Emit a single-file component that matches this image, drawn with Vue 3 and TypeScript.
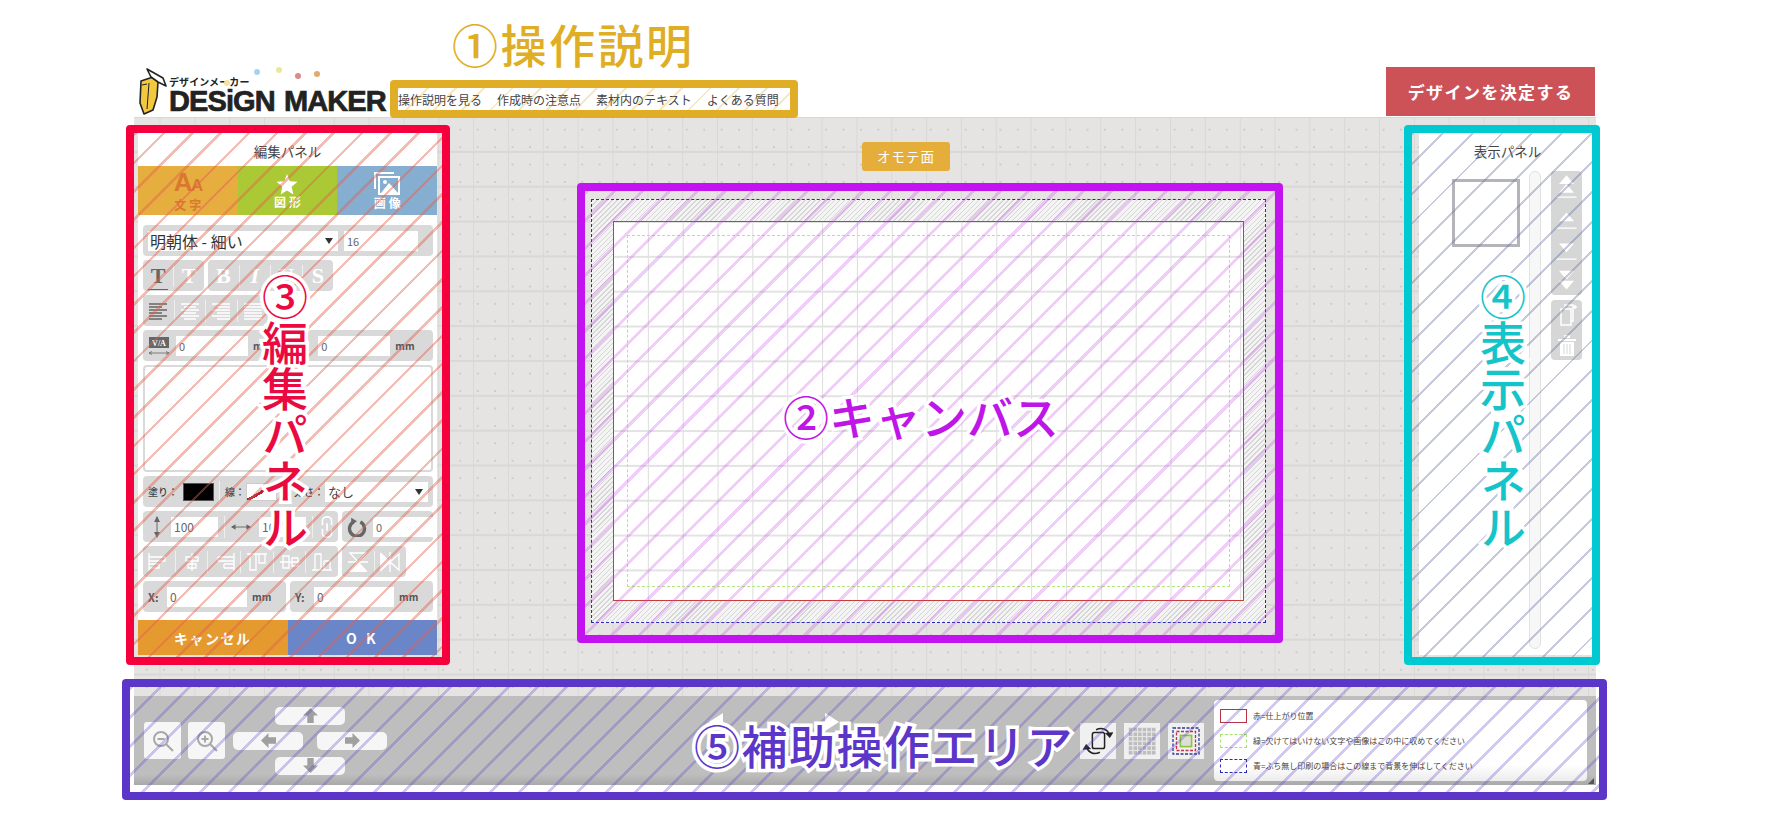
<template>
  <div class="page">
    <header class="top">
      <div class="logo">
        <svg class="logo__pencil" viewBox="0 0 30 48" width="30" height="48">
          <path d="M3 14 L15 10 L20 15 L19 30 L15 43 L6 47 L2 36 Z" fill="#f2c83e" stroke="#222" stroke-width="1.600" stroke-linejoin="round" />
          <path d="M9 2 L25 11 L28 19 L20 15 L13 10 Z" fill="#fff" stroke="#222" stroke-width="1.600" stroke-linejoin="round" />
          <path d="M11 16 L9 42 M4 18 L9 17" fill="none" stroke="#222" stroke-width="1" />
        </svg>
        <div class="logo__text">
          <span class="logo__kana">デザインメーカー</span>
          <span class="logo__name">DESiGN MAKER</span>
        </div>
        <i class="dot dot--blue" /><i class="dot dot--lime" /><i class="dot dot--red" /><i class="dot dot--orange" /><i class="dot dot--yellow" />
      </div>
      <nav class="guide-nav">
        <a v-for="item in navItems" :key="item">{{ item }}</a>
      </nav>
      <button type="button" class="decide">デザインを決定する</button>
    </header>

    <main class="workspace">
      <section class="edit-panel">
        <h2 class="panel-title">編集パネル</h2>
        <div class="tabs">
          <div class="tab tab--text">
            <span class="tab__aa">A<small>A</small></span>
            <span class="tab__label tab__label--dark">文字</span>
          </div>
          <div class="tab tab--shape">
            <svg viewBox="0 0 24 24" width="22" height="22"><path d="M12 1 L15 9 L23.500 9.500 L17 15 L19 23.500 L12 19 L5 23.500 L7 15 L0.500 9.500 L9 9 Z" fill="#fff" /></svg>
            <span class="tab__label">図形</span>
          </div>
          <div class="tab tab--image">
            <svg viewBox="0 0 26 24" width="26" height="24" fill="none" stroke="#fff" stroke-width="2">
              <path d="M1 17 V1 H20" />
              <path d="M5 5 H25 V22 H5 Z" />
              <path d="M7 21 L15 11 L24 21 Z" fill="#fff" stroke="none" />
              <circle cx="11" cy="10" r="2" fill="#fff" stroke="none" />
            </svg>
            <span class="tab__label">画像</span>
          </div>
        </div>

        <div class="edit-body">
          <div class="band band--font">
            <div class="select select--font">明朝体 - 細い<i class="caret" /></div>
            <div class="field field--size">16</div>
          </div>

          <div class="row-groups">
            <div class="band band--style-a">
              <span class="letter letter--on">T<i class="letter__arrow" /></span>
              <span class="letter">T</span>
            </div>
            <div class="band band--style-b">
              <span v-for="(l, i) in styleLetters" :key="i" class="letter" :class="{ 'letter--italic': l === 'I' }">{{ l }}</span>
            </div>
          </div>

          <div class="row-groups">
            <div class="band band--align">
              <span v-for="(a, i) in alignPaths" :key="i" class="cell">
                <svg viewBox="0 0 20 18" width="20" height="18" fill="none" :stroke="i === 0 ? '#666' : '#fff'" stroke-width="1.600"><path :d="a" /></svg>
              </span>
            </div>
          </div>

          <div class="band band--spacing">
            <svg class="spacing-icon" viewBox="0 0 22 20" width="22" height="20">
              <rect x="1" y="1" width="20" height="11" fill="#666" />
              <text x="11" y="10" font-size="8" font-weight="700" fill="#fff" text-anchor="middle" font-family="Liberation Serif, serif">V/A</text>
              <path d="M1 17 H21 M1 17 L4 15.500 M1 17 L4 18.500 M21 17 L18 15.500 M21 17 L18 18.500" stroke="#666" fill="none" stroke-width="0.800" />
            </svg>
            <div class="field field--spacing">0</div>
            <span class="unit">mm</span>
            <div class="field field--spacing field--push">0</div>
            <span class="unit">mm</span>
          </div>

          <div class="textbox" />

          <div class="band band--colors">
            <span class="small-label">塗り：</span>
            <i class="swatch swatch--fill" />
            <i class="divider" />
            <span class="small-label">線：</span>
            <i class="swatch swatch--stroke" />
            <span class="small-label small-label--weight">太さ：</span>
            <div class="select select--weight">なし<i class="caret" /></div>
          </div>

          <div class="row-groups">
            <div class="band band--size">
              <svg viewBox="0 0 12 24" width="12" height="24" stroke="#666" fill="#666"><path d="M6 2 V22" stroke-width="1" /><path d="M6 1 L3 7 H9 Z M6 23 L3 17 H9 Z" stroke="none" /></svg>
              <div class="field field--dim">100</div>
              <i class="divider" />
              <svg viewBox="0 0 22 10" width="20" height="10" stroke="#666" fill="#666"><path d="M1 5 H21" stroke-width="1" /><path d="M0 5 L5 2 V8 Z M22 5 L17 2 V8 Z" stroke="none" /></svg>
              <div class="field field--dim">100</div>
              <i class="divider" />
              <svg viewBox="0 0 16 24" width="16" height="22" fill="none" stroke="#fff" stroke-width="1.800"><path d="M3 10 V5 A5 4 0 0 1 13 5 V10 M3 14 V19 A5 4 0 0 0 13 19 V14 M8 8 V16" /></svg>
            </div>
            <div class="band band--rotate">
              <svg viewBox="0 0 24 24" width="20" height="20" fill="none" stroke="#666" stroke-width="4"><path d="M8 6 A9 9 0 1 0 16 6" /><path d="M5 1 L12 5 L5 10 Z" fill="#666" stroke="none" /></svg>
              <div class="field field--rot">0</div>
            </div>
          </div>

          <div class="row-groups">
            <div class="band band--objects">
              <span v-for="(o, i) in objectPaths" :key="i" class="cell">
                <svg viewBox="0 0 24 20" width="24" height="20" fill="none" stroke="#fff" stroke-width="1.300"><path :d="o" /></svg>
              </span>
            </div>
            <div class="band band--flip">
              <span class="cell"><svg viewBox="0 0 22 22" width="22" height="22" fill="none" stroke="#fff" stroke-width="1.300"><path d="M3 2 H19 L3 20 H19 Z M1 11 H21" /><path d="M3 20 H19 L11 11 Z" fill="#fff" /></svg></span>
              <span class="cell"><svg viewBox="0 0 22 22" width="22" height="22" fill="none" stroke="#fff" stroke-width="1.300"><path d="M2 3 V19 L20 3 V19 Z M11 1 V21" /><path d="M2 3 V19 L11 11 Z" fill="#fff" /></svg></span>
            </div>
          </div>

          <div class="row-groups">
            <div class="band band--pos">
              <b>X:</b><div class="field field--pos">0</div><span class="unit">mm</span>
            </div>
            <div class="band band--pos">
              <b>Y:</b><div class="field field--pos">0</div><span class="unit">mm</span>
            </div>
          </div>
        </div>

        <div class="actions">
          <button type="button" class="action action--cancel">キャンセル</button>
          <button type="button" class="action action--ok">O K</button>
        </div>
      </section>

      <section class="stage">
        <div class="side-badge">オモテ面</div>
        <div class="bleed">
          <div class="trim">
            <div class="safe" />
          </div>
        </div>
      </section>

      <aside class="view-panel">
        <h2 class="panel-title panel-title--view">表示パネル</h2>
        <div class="view-body">
          <div class="thumb" />
          <div class="scroll" />
          <div class="layer-tools">
            <div class="layer-group">
              <span v-for="(p, i) in layerPaths" :key="i" class="layer-btn">
                <svg viewBox="0 0 20 20" width="25" height="25" fill="#fff"><path :d="p" /></svg>
              </span>
            </div>
            <div class="layer-group">
              <span class="layer-btn layer-btn--tall">
                <svg viewBox="0 0 22 24" width="22" height="24" fill="none" stroke="#fff" stroke-width="1.500"><path d="M5 6 H15 V22 H5 Z M9 6 V2 H17 V18 H15 M19 2 V6 M17 4 H21" /></svg>
              </span>
              <span class="layer-btn layer-btn--tall">
                <svg viewBox="0 0 20 24" width="20" height="24" fill="#fff"><path d="M1 6 H19 V8 H1 Z M7 2 H13 V5 H7 Z M3 9 H17 V23 H3 Z" /><path d="M7 11 V21 M10 11 V21 M13 11 V21" stroke="#d6d6d6" stroke-width="1" /></svg>
              </span>
            </div>
          </div>
        </div>
      </aside>
    </main>

    <footer class="assist">
      <button type="button" class="zoom-btn">
        <svg viewBox="0 0 24 24" width="24" height="24" fill="none" stroke="#a8a8a8" stroke-width="2"><circle cx="10" cy="10" r="7" /><path d="M6.500 10 H13.500 M15 15 L22 22" /></svg>
      </button>
      <button type="button" class="zoom-btn">
        <svg viewBox="0 0 24 24" width="24" height="24" fill="none" stroke="#a8a8a8" stroke-width="2"><circle cx="10" cy="10" r="7" /><path d="M6.500 10 H13.500 M10 6.500 V13.500 M15 15 L22 22" /></svg>
      </button>
      <div class="arrows">
        <button type="button" class="arrow arrow--up"><svg viewBox="0 0 14 14" width="15" height="15"><path d="M7 0 L14 7 H10 V14 H4 V7 H0 Z" fill="#a0a0a0" /></svg></button>
        <button type="button" class="arrow"><svg viewBox="0 0 14 14" width="15" height="15"><path d="M0 7 L7 0 V4 H14 V10 H7 V14 Z" fill="#a0a0a0" /></svg></button>
        <button type="button" class="arrow arrow--right"><svg viewBox="0 0 14 14" width="15" height="15"><path d="M14 7 L7 0 V4 H0 V10 H7 V14 Z" fill="#a0a0a0" /></svg></button>
        <button type="button" class="arrow arrow--down"><svg viewBox="0 0 14 14" width="15" height="15"><path d="M7 14 L14 7 H10 V0 H4 V7 H0 Z" fill="#a0a0a0" /></svg></button>
      </div>
      <div class="page-flip">
        <svg viewBox="0 0 20 20" width="20" height="20"><path d="M0 10 L14 1 V19 Z" fill="#fff" /></svg>
        <svg viewBox="0 0 20 20" width="20" height="20"><path d="M20 10 L6 1 V19 Z" fill="#fff" /></svg>
      </div>

      <div class="tools">
        <button type="button" class="tool">
          <svg viewBox="0 0 32 32" width="30" height="30" fill="none" stroke="#222" stroke-width="1.600">
            <rect x="10" y="7" width="13" height="17" rx="2" />
            <path d="M14 4 C20 1 26 3 28 9" /><path d="M25 8 L28.500 11.500 L31 7.500 Z" fill="#222" />
            <path d="M18 28 C12 31 6 29 4 23" /><path d="M7 24 L3.500 20.500 L1 24.500 Z" fill="#222" />
          </svg>
        </button>
        <button type="button" class="tool">
          <svg viewBox="0 0 28 28" width="28" height="28" fill="#bdbdbd" stroke="#e8e8e8" stroke-width="0.800">
            <template v-for="y in 6" :key="y"><rect v-for="x in 6" :key="x" :x="(x - 1) * 4.600 + 0.500" :y="(y - 1) * 4.600 + 0.500" width="4.400" height="4.400" /></template>
          </svg>
        </button>
        <button type="button" class="tool">
          <svg viewBox="0 0 28 28" width="28" height="28" fill="none" stroke-width="1.300">
            <rect x="1" y="1" width="26" height="26" stroke="#2c3a90" stroke-dasharray="3 1.500" />
            <rect x="4.500" y="4.500" width="19" height="19" stroke="#c0334a" stroke-dasharray="3 1.500" />
            <rect x="8.500" y="8.500" width="11" height="11" stroke="#8cc63f" stroke-width="1.800" />
            <rect x="10" y="10" width="8" height="8" fill="#ddd" stroke="none" />
          </svg>
        </button>
      </div>

      <div class="legend">
        <div v-for="item in legendItems" :key="item.text" class="legend__row">
          <i class="legend__swatch" :class="`legend__swatch--${item.kind}`" />
          <span>{{ item.text }}</span>
        </div>
        <i class="legend__corner" />
      </div>
    </footer>

    <!-- 説明用の枠 -->
    <div class="mark mark--guide" />
    <div class="mark mark--canvas" />
    <div class="mark mark--edit" />
    <div class="mark mark--view" />
    <div class="mark mark--assist" />

    <div class="caption caption--guide">①操作説明</div>
    <div class="caption caption--canvas">②キャンバス</div>
    <div class="caption caption--edit caption--v">③編集パネル</div>
    <div class="caption caption--view caption--v">④表示パネル</div>
    <div class="caption caption--assist">⑤補助操作エリア</div>
  </div>
</template>

<script setup lang="ts">
const navItems = ['操作説明を見る', '作成時の注意点', '素材内のテキスト', 'よくある質問']
const styleLetters = ['B', 'I', 'U', 'S']

const alignPaths = [
  'M1 2 H19 M1 5 H14 M1 8 H19 M1 11 H14 M1 14 H19 M1 17 H14',
  'M1 2 H19 M4 5 H16 M1 8 H19 M4 11 H16 M1 14 H19 M4 17 H16',
  'M1 2 H19 M6 5 H19 M1 8 H19 M6 11 H19 M1 14 H19 M6 17 H19',
  'M1 2 H19 M1 5 H19 M1 8 H19 M1 11 H19 M1 14 H19 M1 17 H19'
]

const objectPaths = [
  'M2 1 V19 M2 5 H18 V9 H2 M2 12 H12 V16 H2',
  'M12 1 V19 M6 5 H18 V9 H6 Z M8 12 H16 V16 H8 Z',
  'M22 1 V19 M6 5 H22 M6 9 H22 M6 5 V9 M12 12 H22 M12 16 H22 M12 12 V16',
  'M2 2 H22 M5 2 V18 H11 V2 M14 2 V11 H20 V2',
  'M2 10 H22 M5 4 H11 V16 H5 Z M14 6 H20 V14 H14 Z',
  'M2 18 H22 M5 2 H11 V18 M5 2 V18 M14 9 H20 V18 M14 9 V18'
]

const layerPaths = [
  'M10 1 L16 8 H4 Z M10 8 L16 15 H4 Z M2 18 H18 V19 H2 Z',
  'M10 6 L16 13 H4 Z M2 18 H18 V19 H2 Z',
  'M4 6 H16 L10 13 Z M2 18 H18 V19 H2 Z',
  'M4 3 H16 L10 10 Z M4 11 H16 L10 18 Z'
]

const legendItems = [
  { kind: 'red', text: '赤=仕上がり位置' },
  { kind: 'green', text: '緑=欠けてはいけない文字や画像はこの中に収めてください' },
  { kind: 'blue', text: '青=ふち無し印刷の場合はこの線まで背景を伸ばしてください' }
]
</script>

<style>
body {
  background: #fff;
}
</style>

<style scoped>
.page {
  position: relative;
  box-sizing: border-box;
  width: 1771px;
  height: 834px;
  padding-left: 134px;
  overflow: hidden;
  background: #fff;
  font-family: "Noto Sans CJK JP", "Noto Sans", sans-serif;
  color: #444;
}

.top {
  display: flex;
  align-items: flex-end;
  width: 1462px;
  height: 117px;
  padding-left: 4px;
  box-sizing: border-box;
}

.logo {
  position: relative;
  display: flex;
  align-items: flex-end;
  width: 248px;
  margin-bottom: 2px;
}

.logo__pencil {
  flex: none;
  margin-right: 1px;
}

.logo__text {
  display: flex;
  flex-direction: column;
}

.logo__kana {
  font-size: 10px;
  line-height: 12px;
  font-weight: 700;
  color: #222;
  letter-spacing: 0.1px;
}

.logo__name {
  font-family: "Liberation Sans", sans-serif;
  font-size: 29px;
  line-height: 27px;
  font-weight: 700;
  color: #222;
  letter-spacing: -0.9px;
  word-spacing: 2px;
  white-space: nowrap;
  -webkit-text-stroke: 0.7px #222;
}

.dot {
  position: absolute;
  width: 6px;
  height: 6px;
  border-radius: 50%;
}

.dot--blue { left: 116px; top: 2px; background: #a6d3ec; }
.dot--lime { left: 138px; top: 0; background: #e8e89a; }
.dot--red { left: 157px; top: 6px; background: #dd8a8e; }
.dot--orange { left: 176px; top: 4px; background: #e2aa6c; }
.dot--yellow { left: 86px; top: 13px; background: #f3e3a0; }

.guide-nav {
  display: flex;
  gap: 15px;
  margin: 0 0 8px 10px;
  padding: 0 19px 0 2px;
  height: 20px;
  align-items: center;
  font-size: 12px;
  color: #444;
  white-space: nowrap;
}

.decide {
  width: 209px;
  height: 49px;
  margin: 0 1px 1px auto;
  border: 0;
  background: #cd5257;
  color: #fff;
  font-family: inherit;
  font-size: 17px;
  font-weight: 700;
  letter-spacing: 1.400px;
}

.workspace {
  display: flex;
  align-items: flex-start;
  box-sizing: border-box;
  width: 1462px;
  height: 579px;
  padding: 13px 0 0 4px;
  background-color: #e5e4e2;
  background-image:
    linear-gradient(#d8d8d6 1.500px, transparent 1.500px),
    linear-gradient(90deg, #d8d8d6 1px, transparent 1px),
    radial-gradient(circle, #c6c6c6 0.6px, transparent 1px);
  background-size: 34.85px 34.85px, 34.85px 34.85px, 17.425px 17.425px;
  background-position: 25.500px 33.900px, 25.500px 33.900px, 4px 4px;
}

.edit-panel {
  flex: none;
  width: 299px;
  height: 525px;
  background: #fff;
  display: flex;
  flex-direction: column;
}

.panel-title {
  height: 36px;
  margin: 0;
  font-size: 13.500px;
  font-weight: 400;
  line-height: 42px;
  text-align: center;
  color: #444;
}

.tabs {
  display: grid;
  grid-template-columns: repeat(3, 1fr);
  height: 49px;
}

.tab {
  display: flex;
  flex-direction: column;
  align-items: center;
  justify-content: center;
  gap: 0;
}

.tab--text { background: #e6ae3f; }
.tab--shape { background: #abc835; }
.tab--image { background: #86aed0; }

.tab__aa {
  font-family: "Liberation Sans", sans-serif;
  font-size: 26px;
  line-height: 25px;
  font-weight: 700;
  letter-spacing: -1.500px;
  color: #d9782f;
}

.tab__aa small {
  font-size: 17px;
}

.tab__label {
  font-size: 12px;
  line-height: 14px;
  font-weight: 700;
  letter-spacing: 3px;
  margin-right: -3px;
  color: #fff;
}

.tab__label--dark {
  color: #d9782f;
}

.edit-body {
  display: flex;
  flex-direction: column;
  gap: 4px;
  padding: 10px 4px 0 5px;
}

.band {
  display: flex;
  align-items: center;
  height: 31px;
  box-sizing: border-box;
  background: #d9d9d9;
  border-radius: 4px;
}

.row-groups {
  display: flex;
  gap: 4px;
}

.band--font {
  padding: 0 5px;
  gap: 6px;
}

.select {
  position: relative;
  background: #fff;
  height: 20px;
  line-height: 20px;
  box-sizing: border-box;
}

.select--font {
  width: 190px;
  padding-left: 2px;
  font-size: 16px;
  color: #333;
}

.select--weight {
  flex: 1;
  padding-left: 3px;
  font-size: 13px;
  margin-left: 1px;
}

.caret {
  position: absolute;
  right: 5px;
  top: 7px;
  width: 0;
  height: 0;
  border-left: 4px solid transparent;
  border-right: 4px solid transparent;
  border-top: 6px solid #333;
}

.field {
  background: #fff;
  height: 20px;
  line-height: 20px;
  padding-left: 3px;
  box-sizing: border-box;
  font-size: 11px;
  color: #666;
}

.field--size { width: 74px; }
.field--spacing { width: 72px; margin-left: 6px; }
.field--push { margin-left: 46px; }
.field--dim { width: 47px; margin-left: 8px; font-size: 12px; }
.field--rot { flex: 1; margin-left: 6px; }
.field--pos { width: 80px; margin-left: 7px; font-size: 12px; }

.unit {
  margin-left: 5px;
  font-size: 10px;
  font-weight: 700;
  color: #555;
}

.band--style-a { width: 61px; }
.band--style-b { width: 125px; }

.letter {
  position: relative;
  flex: 1;
  height: 22px;
  text-align: center;
  font-family: "Liberation Serif", serif;
  font-size: 22px;
  line-height: 22px;
  font-weight: 700;
  color: #fff;
}

.letter + .letter {
  border-left: 1px solid #efefef;
}

.letter--on {
  color: #666;
}

.letter--italic {
  font-style: italic;
}

.letter__arrow {
  position: absolute;
  left: 5px;
  right: 5px;
  bottom: -3px;
  height: 1px;
  background: #666;
}

.band--align {
  width: 125px;
}

.band--objects {
  width: 195px;
}

.band--flip {
  width: 64px;
}

.cell {
  flex: 1;
  display: flex;
  align-items: center;
  justify-content: center;
  height: 22px;
}

.cell + .cell {
  border-left: 1px solid #efefef;
}

.band--spacing {
  padding-left: 5px;
}

.spacing-icon {
  flex: none;
}

.textbox {
  height: 107px;
  box-sizing: border-box;
  border: 2px solid #d9d9d9;
  border-radius: 4px;
  background: #fff;
}

.band--colors {
  padding: 0 5px;
}

.small-label {
  font-size: 10px;
  font-weight: 500;
  color: #444;
  white-space: nowrap;
}

.small-label--weight {
  margin-left: 17px;
}

.swatch {
  flex: none;
  width: 31px;
  height: 18px;
  box-sizing: border-box;
}

.swatch--fill {
  margin-left: 5px;
  background: #000;
  border: 1px solid #555;
}

.swatch--stroke {
  margin-left: 1px;
  background: linear-gradient(150deg, #fff 45%, #b81f30 45%, #b81f30 55%, #fff 55%);
  border: 1px solid #ccc;
}

.divider {
  flex: none;
  width: 1px;
  height: 22px;
  margin: 0 5px;
  background: #efefef;
}

.band--size {
  width: 195px;
  padding-left: 8px;
}

.band--size .divider {
  margin: 0 6px;
}

.band--rotate {
  flex: 1;
  padding-left: 5px;
}

.band--pos {
  flex: 1;
  padding-left: 5px;
  font-size: 11px;
  color: #555;
}

.band--pos b {
  width: 12px;
  font-weight: 700;
}

.actions {
  display: grid;
  grid-template-columns: 1fr 1fr;
  height: 35px;
  margin-top: auto;
}

.action {
  border: 0;
  color: #fff;
  font-family: inherit;
  font-size: 14px;
  font-weight: 700;
  letter-spacing: 1.500px;
}

.action--cancel { background: #e59a30; }
.action--ok { background: #6a86c8; letter-spacing: 3px; }

.stage {
  flex: 1;
  display: flex;
  flex-direction: column;
  align-items: center;
}

.side-badge {
  width: 88px;
  height: 29px;
  margin: 12px 44px 28px 0;
  line-height: 29px;
  text-align: center;
  border-radius: 3px;
  background: #e5ae3a;
  color: #fff;
  font-size: 13.500px;
  font-weight: 400;
  letter-spacing: 1px;
}

.bleed {
  box-sizing: border-box;
  width: 675px;
  height: 424px;
  padding: 21px;
  border: 1px dashed #2a2ab8;
  background: repeating-linear-gradient(135deg, #d6d6d6 0 1px, #f4f4f4 1px 3.500px);
}

.trim {
  box-sizing: border-box;
  height: 100%;
  padding: 13px;
  border: 1px solid #c83c3c;
  background-color: #fff;
  background-image:
    linear-gradient(#e3e3e3 1.500px, transparent 1.500px),
    linear-gradient(90deg, #dcdcdc 1px, transparent 1px);
  background-size: 34.85px 34.85px;
  background-position: -1px -1px;
}

.safe {
  box-sizing: border-box;
  height: 100%;
  border: 1px dashed #b4e87e;
}

.view-panel {
  flex: none;
  width: 177px;
  height: 525px;
  background: #fff;
}

.panel-title--view {
  height: 41px;
}

.view-body {
  display: flex;
  align-items: flex-start;
  padding-left: 33px;
}

.thumb {
  flex: none;
  box-sizing: border-box;
  width: 68px;
  height: 68px;
  margin: 8px 9px 0 0;
  border: 3px solid #b4b4ba;
}

.scroll {
  flex: none;
  box-sizing: border-box;
  width: 12px;
  height: 478px;
  border: 1px solid #e2e2e2;
  border-radius: 6px;
  background: #f7f7f7;
  margin-right: 10px;
}

.layer-tools {
  display: flex;
  flex-direction: column;
  gap: 5px;
  width: 31px;
}

.layer-group {
  display: flex;
  flex-direction: column;
  align-items: center;
  background: #d6d6d6;
  border-radius: 4px;
}

.layer-btn {
  display: flex;
  align-items: center;
  justify-content: center;
  width: 100%;
  height: 31px;
}

.layer-btn--tall {
  height: 30px;
}

.assist {
  position: relative;
  display: flex;
  align-items: center;
  box-sizing: border-box;
  width: 1462px;
  height: 89px;
  padding: 0 9px 0 10px;
  background: linear-gradient(#bebebe 0 88%, #a9a9a9);
}

.zoom-btn {
  display: flex;
  align-items: center;
  justify-content: center;
  width: 37px;
  height: 37px;
  margin-right: 7px;
  padding: 0;
  border: 0;
  border-radius: 3px;
  background: #f6f6f6;
}

.arrows {
  display: grid;
  grid-template-columns: 70px 70px;
  grid-auto-rows: 18px;
  column-gap: 14px;
  row-gap: 7px;
  margin-left: 1px;
}

.arrow {
  display: flex;
  align-items: center;
  justify-content: center;
  padding: 0;
  border: 0;
  border-radius: 5px;
  background: #f6f6f6;
}

.arrow--up,
.arrow--down {
  grid-column: 1 / 3;
  justify-self: center;
  width: 70px;
}

.page-flip {
  display: flex;
  justify-content: space-between;
  width: 130px;
  margin: -38px 0 0 322px;
}

.tools {
  display: flex;
  gap: 8px;
  margin-left: auto;
}

.tool {
  display: flex;
  align-items: center;
  justify-content: center;
  width: 36px;
  height: 36px;
  padding: 0;
  border: 0;
  background: #f0f0f0;
}

.legend {
  position: relative;
  display: flex;
  flex-direction: column;
  justify-content: center;
  gap: 11px;
  box-sizing: border-box;
  width: 373px;
  height: 81px;
  margin-left: 10px;
  padding-left: 6px;
  background: linear-gradient(#fff 80%, #ececec);
  border-radius: 4px;
  font-size: 8px;
  color: #444;
}

.legend__row {
  display: flex;
  align-items: center;
  gap: 6px;
  height: 14px;
  white-space: nowrap;
}

.legend__swatch {
  flex: none;
  width: 27px;
  height: 14px;
  box-sizing: border-box;
  background: #fff;
}

.legend__swatch--red { border: 1px solid #b8324a; }
.legend__swatch--green { border: 1px dashed #a8e070; }
.legend__swatch--blue { border: 1px dashed #2a2ab8; }

.legend__corner {
  position: absolute;
  right: -7px;
  bottom: -3px;
  width: 0;
  height: 0;
  border-left: 6px solid transparent;
  border-bottom: 6px solid #555;
}

.mark {
  position: absolute;
  box-sizing: border-box;
  border: 8px solid;
  border-radius: 4px;
  pointer-events: none;
}

.mark--guide {
  left: 390px;
  top: 80px;
  width: 408px;
  height: 38px;
  border-color: #dfae26;
  background: repeating-linear-gradient(135deg, rgba(223, 174, 38, 0.28) 0 2px, transparent 2px 20px);
}

.mark--canvas {
  left: 577px;
  top: 183px;
  width: 706px;
  height: 460px;
  border-color: #c313ee;
  background: repeating-linear-gradient(135deg, rgba(195, 60, 230, 0.25) 0 3px, transparent 3px 19.500px);
}

.mark--edit {
  left: 126px;
  top: 125px;
  width: 324px;
  height: 540px;
  border-color: #f5003c;
  background: repeating-linear-gradient(135deg, rgba(225, 95, 75, 0.42) 0 2.500px, transparent 2.500px 20px);
}

.mark--view {
  left: 1404px;
  top: 125px;
  width: 196px;
  height: 540px;
  border-color: #00c9d1;
  background: repeating-linear-gradient(135deg, rgba(105, 115, 165, 0.38) 0 2px, transparent 2px 21px);
}

.mark--assist {
  left: 122px;
  top: 679px;
  width: 1485px;
  height: 121px;
  border-color: #5b36c8;
  background: repeating-linear-gradient(135deg, rgba(90, 60, 200, 0.28) 0 2.500px, transparent 2.500px 20.500px);
}

.caption {
  position: absolute;
  font-size: 46px;
  line-height: 50px;
  font-weight: 500;
  white-space: nowrap;
  -webkit-text-stroke: 7px #fff;
  paint-order: stroke fill;
}

.caption--v {
  writing-mode: vertical-rl;
  line-height: 46px;
}

.caption--guide {
  left: 452px;
  top: 18px;
  color: #e0ae25;
  letter-spacing: 2.500px;
  -webkit-text-stroke: 0;
}

.caption--canvas {
  left: 783px;
  top: 390px;
  color: #c015e8;
}

.caption--edit {
  left: 262px;
  top: 274px;
  color: #ea0a40;
}

.caption--view {
  left: 1480px;
  top: 274px;
  color: #14c4c9;
}

.caption--assist {
  left: 694px;
  top: 719px;
  color: #5b36c8;
  letter-spacing: 1.500px;
}
</style>
